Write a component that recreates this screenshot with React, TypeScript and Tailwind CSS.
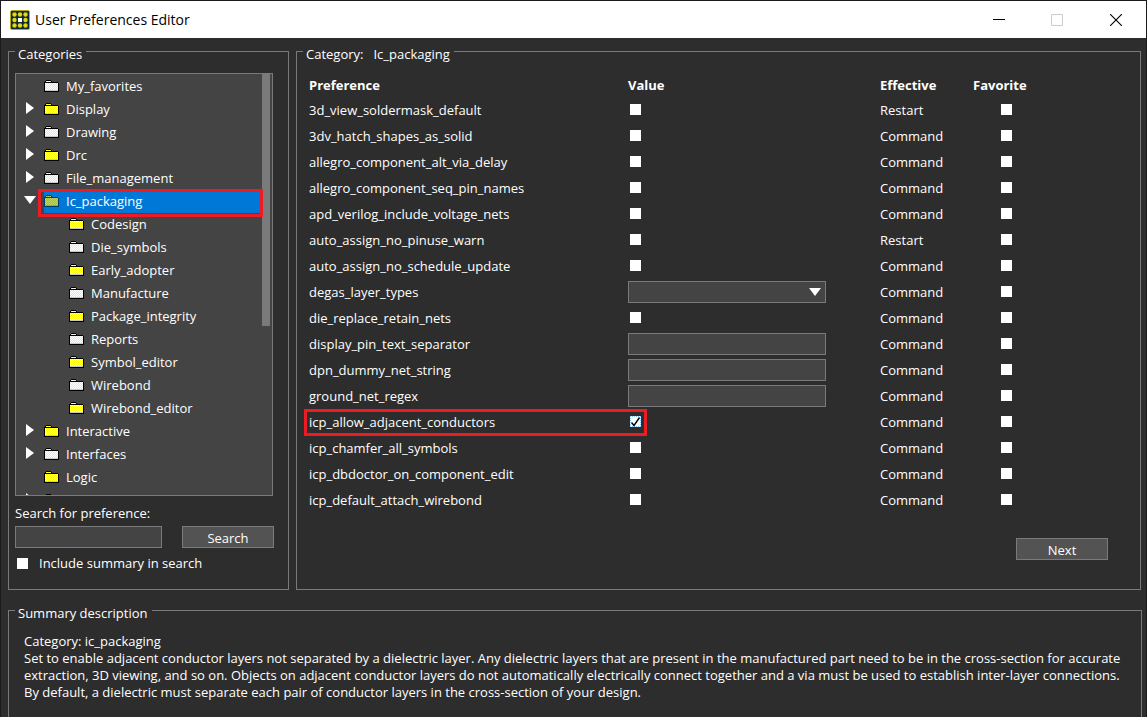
import { useState } from 'react';

type Category = {
  name: string;
  children?: string[];
  leaf?: boolean;
};

const categories: Category[] = [
  { name: 'My_favorites', leaf: true },
  { name: 'Display' },
  { name: 'Drawing' },
  { name: 'Drc' },
  { name: 'File_management' },
  {
    name: 'Ic_packaging',
    children: [
      'Codesign',
      'Die_symbols',
      'Early_adopter',
      'Manufacture',
      'Package_integrity',
      'Reports',
      'Symbol_editor',
      'Wirebond',
      'Wirebond_editor',
    ],
  },
  { name: 'Interactive' },
  { name: 'Interfaces' },
  { name: 'Logic', leaf: true },
  { name: '' },
];

type Preference = {
  name: string;
  kind?: 'text' | 'select';
  effective?: string;
  checked?: boolean;
};

const preferences: Preference[] = [
  { name: '3d_view_soldermask_default', effective: 'Restart' },
  { name: '3dv_hatch_shapes_as_solid' },
  { name: 'allegro_component_alt_via_delay' },
  { name: 'allegro_component_seq_pin_names' },
  { name: 'apd_verilog_include_voltage_nets' },
  { name: 'auto_assign_no_pinuse_warn', effective: 'Restart' },
  { name: 'auto_assign_no_schedule_update' },
  { name: 'degas_layer_types', kind: 'select' },
  { name: 'die_replace_retain_nets' },
  { name: 'display_pin_text_separator', kind: 'text' },
  { name: 'dpn_dummy_net_string', kind: 'text' },
  { name: 'ground_net_regex', kind: 'text' },
  { name: 'icp_allow_adjacent_conductors', checked: true },
  { name: 'icp_chamfer_all_symbols' },
  { name: 'icp_dbdoctor_on_component_edit' },
  { name: 'icp_default_attach_wirebond' },
];

function AppIcon() {
  return (
    <svg width="20" height="20" viewBox="0 0 20 20" className="shrink-0">
      <rect x="0.5" y="0.5" width="19" height="19" rx="1.5" fill="#0b2a33" stroke="#b5ac12" />
      {[4.5, 10, 15.5].map((y) =>
        [4.5, 10, 15.5].map((x) =>
          x === 10 && y === 10 ? (
            <rect key="mid" x="8" y="8" width="4" height="4" fill="#fff" />
          ) : (
            <circle key={`${x}-${y}`} cx={x} cy={y} r="2.2" fill="#e6d515" />
          )
        )
      )}
    </svg>
  );
}

function FolderIcon({ selected }: { selected?: boolean }) {
  const id = selected ? 'dither-selected' : 'dither';
  return (
    <svg width="15" height="12" viewBox="0 0 15 12" shapeRendering="crispEdges" className="mb-0.5 shrink-0">
      <defs>
        <pattern id={id} width="2" height="2" patternUnits="userSpaceOnUse">
          <rect width="2" height="2" fill={selected ? '#80bc9a' : '#ffffff'} />
          <rect x="1" width="1" height="1" fill={selected ? '#c0d860' : '#ffff00'} />
          <rect y="1" width="1" height="1" fill={selected ? '#c0d860' : '#ffff00'} />
        </pattern>
      </defs>
      <path d="M2 0h5v1h1v1h6v1h1v9H0V2h1V1h1z" fill={selected ? '#003c6b' : '#000'} />
      <path d="M2 1h5v1H2zM1 3h13v7H1z" fill={`url(#${id})`} />
      <path d="M1 10h13v1H1z" fill={selected ? '#80a8b0' : '#c8c8c8'} />
    </svg>
  );
}

function Arrow({ open }: { open?: boolean }) {
  return (
    <svg width="12" height="12" viewBox="0 0 12 12" className="block">
      <path d={open ? 'M0 2h12L6 10z' : 'M2 0l8 6-8 6z'} fill="#fff" />
    </svg>
  );
}

function Checkbox({ label, id, checked }: { label?: string; id?: string; checked?: boolean }) {
  return (
    <span className="relative block size-[11px] shrink-0">
      <input
        type="checkbox"
        id={id}
        aria-label={label}
        defaultChecked={checked}
        className="peer block size-[11px] appearance-none bg-white checked:border checked:border-dotted checked:border-[#8cc4f2]"
      />
      <svg
        viewBox="0 0 11 11"
        className="pointer-events-none absolute inset-0 hidden size-[11px] peer-checked:block"
      >
        <path d="M1.5 6.5L4 9.5L9.5 1.5" fill="none" stroke="#000" strokeWidth="1.4" />
      </svg>
    </span>
  );
}

function CategoryTree() {
  const [selected, setSelected] = useState('Ic_packaging');
  const [open, setOpen] = useState(true);

  return (
    <div className="relative mt-[9px] mr-px h-[423px] overflow-hidden border border-[#7a7a7a] bg-[#444] pt-px">
      <ul>
        {categories.map((cat) => {
          const isSelected = selected === cat.name;
          const expanded = open && !!cat.children;
          return (
            <li key={cat.name}>
              <div className="relative flex h-[23px] items-center pl-2">
                <span className="w-5">
                  {!cat.leaf && (
                    <button
                      type="button"
                      aria-label="Toggle"
                      className="block pb-1"
                      onClick={() => cat.children && setOpen(!open)}
                    >
                      <Arrow open={expanded} />
                    </button>
                  )}
                </span>
                <button
                  type="button"
                  onClick={() => setSelected(cat.name)}
                  className={`mr-3 flex h-[23px] flex-1 items-center gap-[7px] text-left ${
                    isSelected ? 'bg-[#0078d7]' : ''
                  }`}
                >
                  <FolderIcon selected={isSelected} />
                  <span>{cat.name}</span>
                </button>
                {isSelected && (
                  <span className="pointer-events-none absolute -top-px right-[9px] left-[22px] z-10 h-[28px] border-3 border-[#ed1c24]" />
                )}
              </div>
              {expanded && (
                <ul>
                  {cat.children!.map((child) => (
                    <li key={child} className="flex h-[23px] items-center pl-[53px]">
                      <button type="button" className="flex items-center gap-[7px]">
                        <FolderIcon />
                        <span>{child}</span>
                      </button>
                    </li>
                  ))}
                </ul>
              )}
            </li>
          );
        })}
      </ul>
      <div className="absolute top-0 right-0.5 h-[252px] w-2 bg-[#7a7a7a]" />
    </div>
  );
}

function PreferenceValue({ pref }: { pref: Preference }) {
  if (pref.kind === 'select') {
    return (
      <div className="relative w-[198px]">
        <select
          aria-label={pref.name}
          className="block h-[22px] w-full appearance-none border border-[#7a7a7a] bg-[#444]"
        >
          <option></option>
        </select>
        <svg
          width="12"
          height="8"
          viewBox="0 0 12 8"
          className="pointer-events-none absolute top-[7px] right-[5px]"
        >
          <path d="M0 0h12L6 8z" fill="#fff" />
        </svg>
      </div>
    );
  }
  if (pref.kind === 'text') {
    return (
      <input
        type="text"
        aria-label={pref.name}
        className="block h-[22px] w-[198px] border border-[#7a7a7a] bg-[#444] px-1"
      />
    );
  }
  return (
    <div className="pb-0.5 pl-0.5">
      <Checkbox label={pref.name} checked={pref.checked} />
    </div>
  );
}

function PreferenceTable() {
  return (
    <table className="mt-[9px] w-full table-fixed text-left">
      <colgroup>
        <col className="w-[319px]" />
        <col className="w-[252px]" />
        <col className="w-[93px]" />
        <col />
      </colgroup>
      <thead>
        <tr className="h-6">
          <th className="p-0">Preference</th>
          <th className="p-0">Value</th>
          <th className="p-0">Effective</th>
          <th className="p-0">Favorite</th>
        </tr>
      </thead>
      <tbody>
        {preferences.map((pref) => (
          <tr key={pref.name} className="h-[26px]">
            <td className="relative p-0">
              {pref.name}
              {pref.checked && (
                <span className="pointer-events-none absolute top-0 -left-[5px] h-[27px] w-[343px] border-3 border-[#ed1c24]" />
              )}
            </td>
            <td className="p-0">
              <PreferenceValue pref={pref} />
            </td>
            <td className="p-0">{pref.effective ?? 'Command'}</td>
            <td className="p-0 pb-0.5 pl-7">
              <Checkbox label={`Favorite ${pref.name}`} />
            </td>
          </tr>
        ))}
      </tbody>
    </table>
  );
}

export default function App() {
  return (
    <div className="flex min-h-screen flex-col border border-b-0 border-[#1b1b1b] bg-[#2d2d2d] font-['Open_Sans','Noto_Sans',sans-serif] text-[13px] leading-[17px] text-white">
      <header className="flex h-[37px] items-center bg-white pl-[9px] text-black">
        <AppIcon />
        <h1 className="ml-[5px] flex-1 text-sm">User Preferences Editor</h1>
        <button type="button" aria-label="Minimize" className="flex w-[58px] justify-center">
          <svg width="12" height="12" viewBox="0 0 12 12" shapeRendering="crispEdges">
            <path d="M0 5h12v1H0z" fill="#000" />
          </svg>
        </button>
        <button type="button" aria-label="Maximize" disabled className="flex w-[58px] justify-center">
          <svg width="12" height="12" viewBox="0 0 12 12">
            <path d="M0.5 0.5h11v11h-11z" fill="none" stroke="#ccc" />
          </svg>
        </button>
        <button type="button" aria-label="Close" className="flex w-[60px] justify-center">
          <svg width="12" height="12" viewBox="0 0 12 12">
            <path d="M0 0l12 12M12 0L0 12" stroke="#000" strokeWidth="1.1" />
          </svg>
        </button>
      </header>

      <main className="flex flex-1 flex-col pr-1 pl-[7px]">
        <div className="flex items-stretch gap-[7px]">
          <fieldset className="w-[281px] shrink-0 border border-[#7a7a7a] pr-3.5 pb-4 pl-1.5">
            <legend className="pt-2 pr-1 pb-0.5 pl-[3px] leading-4">Categories</legend>
            <CategoryTree />
            <label htmlFor="search" className="mt-[9px] block">
              Search for preference:
            </label>
            <div className="mt-1 flex gap-5">
              <input
                id="search"
                type="text"
                className="h-[22px] w-[147px] border border-[#7a7a7a] bg-[#444] px-1"
              />
              <button type="button" className="h-[22px] flex-1 border border-[#7a7a7a] bg-[#535353] pt-0.5">
                Search
              </button>
            </div>
            <div className="mt-[7px] flex items-center gap-[11px] pl-0.5">
              <Checkbox id="summary" />
              <label htmlFor="summary">Include summary in search</label>
            </div>
          </fieldset>

          <fieldset className="mr-px min-w-0 flex-1 border border-[#7a7a7a] pb-[29px] pl-3">
            <legend className="-ml-1.5 flex gap-2.5 pt-2 pr-1 pb-0.5 pl-[3px] leading-4">
              <span>Category:</span>
              <span>Ic_packaging</span>
            </legend>
            <PreferenceTable />
            <div className="mt-[25px] flex justify-end pr-8">
              <button type="button" className="h-[22px] w-[92px] border border-[#7a7a7a] bg-[#535353] pt-0.5">
                Next
              </button>
            </div>
          </fieldset>
        </div>

        <fieldset className="mt-[7px] min-w-0 flex-1 border border-b-0 border-[#7a7a7a] px-[15px]">
          <legend className="-ml-[9px] pt-2 pr-1 pb-0.5 pl-[3px] leading-4">Summary description</legend>
          <div className="mt-2.5">
            <p>Category: ic_packaging</p>
            <p>
              Set to enable adjacent conductor layers not separated by a dielectric layer. Any
              dielectric layers that are present in the manufactured part need to be in the
              cross-section for accurate extraction, 3D viewing, and so on. Objects on adjacent
              conductor layers do not automatically electrically connect together and a via must be
              used to establish inter-layer connections.
            </p>
            <p>
              By default, a dielectric must separate each pair of conductor layers in the
              cross-section of your design.
            </p>
          </div>
        </fieldset>
      </main>
    </div>
  );
}
